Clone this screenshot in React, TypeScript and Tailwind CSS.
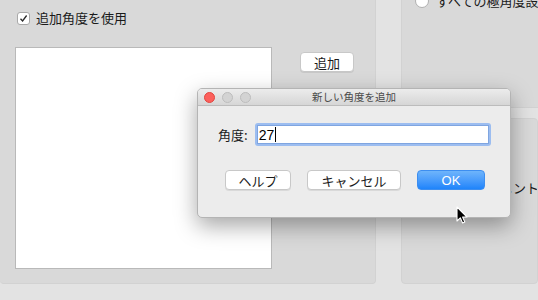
import React from 'react';

const jp = { fontFamily: '"Noto Sans CJK JP", "Liberation Sans", sans-serif' };

const WhiteButton = ({ label, width }: { label: string; width: string }) => (
  <div
    className={`${width} h-[20px] flex items-center justify-center bg-white rounded-[4px] border border-[#c8c8c8] shadow-[0_1px_0_rgba(0,0,0,0.08)] text-[13px] text-[#1a1a1a] leading-none`}
    style={jp}
  >
    {label}
  </div>
);

const App = () => {
  return (
    <div className="relative w-[538px] h-[300px] overflow-hidden bg-[#e3e3e3] select-none" style={jp}>
      <div className="flex h-[284px]">
        {/* Left panel */}
        <div className="w-[376px] shrink-0 h-full bg-[#d9d9d9] rounded-b-[4px] border-r border-b border-[#d2d2d2] flex flex-col">
          <div className="flex items-center gap-[6px] pl-[17px] pt-[11px]">
            <div className="w-[13px] h-[13px] bg-white rounded-[3px] border border-[#a9a9a9] flex items-center justify-center">
              <svg width="9" height="9" viewBox="0 0 9 9">
                <path d="M1.5 4.8 L3.6 7 L7.6 1.5" fill="none" stroke="#2a2a2a" strokeWidth="1.3" />
              </svg>
            </div>
            <span className="text-[13px] text-[#1a1a1a] leading-[14px]">追加角度を使用</span>
          </div>
          <div className="flex pl-[15px] pt-[22px] gap-[28px]">
            <div className="w-[257px] h-[222px] bg-white border border-[#b9b9b9]" />
            <div className="flex flex-col gap-[16px] pt-[5px]">
              <WhiteButton label="追加" width="w-[54px]" />
              <WhiteButton label="" width="w-[54px]" />
            </div>
          </div>
        </div>

        {/* Right column */}
        <div className="ml-[25px] flex-1 min-w-0 flex flex-col gap-[10px]">
          <div className="h-[108px] bg-[#d9d9d9] rounded-bl-[4px] border-l border-b border-[#d2d2d2] pl-[13px] overflow-hidden">
            <div className="flex items-center gap-[7px] mt-[-6px]">
              <div className="w-[14px] h-[14px] shrink-0 rounded-full bg-white border border-[#b0b0b0]" />
              <span className="text-[13px] text-[#1a1a1a] whitespace-nowrap leading-[14px]">すべての極角度設定</span>
            </div>
          </div>
          <div className="flex-1 bg-[#d9d9d9] rounded-[4px] border border-[#d2d2d2] pl-[85px] pt-[55px] overflow-hidden">
            <span className="text-[13px] text-[#1a1a1a] whitespace-nowrap">コメント</span>
          </div>
        </div>
      </div>

      {/* Dialog */}
      <div className="absolute left-[197px] top-[88px] w-[314px] h-[130px] bg-[#ececec] rounded-[5px] border border-[#b4b4b4] shadow-[0_8px_22px_rgba(0,0,0,0.35)] overflow-hidden">
        <div className="relative h-[17px] bg-gradient-to-b from-[#ececec] to-[#d6d6d6] border-b border-[#bcbcbc] flex items-center justify-center">
          <div className="absolute left-[6px] top-[3px] flex gap-[7px]">
            <div className="w-[11px] h-[11px] rounded-full bg-[#fc605c] border border-[#e0463f]" />
            <div className="w-[11px] h-[11px] rounded-full bg-[#d3d3d3] border border-[#bcbcbc]" />
            <div className="w-[11px] h-[11px] rounded-full bg-[#d3d3d3] border border-[#bcbcbc]" />
          </div>
          <span className="text-[10.5px] text-[#4a4a4a] leading-none">新しい角度を追加</span>
        </div>
        <div className="flex items-center pl-[20px] pt-[17px] gap-[7px]">
          <span className="text-[13px] text-[#1a1a1a] leading-none">角度:</span>
          <div className="w-[236px] h-[23px] rounded-[3px] bg-[#9cbdf0] p-[2px]">
            <div className="w-full h-full bg-white border border-[#7fa5e0] flex items-center pl-[1px]">
              <span className="text-[14px] text-black leading-none" style={{ fontFamily: '"Liberation Sans", sans-serif' }}>27</span>
              <div className="w-[1px] h-[15px] bg-black ml-[1px]" />
            </div>
          </div>
        </div>
        <div className="flex pl-[27px] pt-[24px] gap-[16px]">
          <WhiteButton label="ヘルプ" width="w-[66px]" />
          <WhiteButton label="キャンセル" width="w-[94px]" />
          <div
            className="w-[68px] h-[20px] rounded-[4px] bg-gradient-to-b from-[#6eb4fb] to-[#1d84fb] border border-[#3d8ef0] flex items-center justify-center text-[13px] text-white leading-none"
            style={{ fontFamily: '"Liberation Sans", sans-serif' }}
          >
            OK
          </div>
        </div>
      </div>

      {/* Mouse pointer */}
      <svg className="absolute left-[456px] top-[206px]" width="14" height="19" viewBox="0 0 14 19">
        <path d="M1 1 L1 15 L4.3 11.8 L6.6 17 L8.8 16 L6.6 11 L11 11 Z" fill="#000" stroke="#fff" strokeWidth="1.1" strokeLinejoin="round" />
      </svg>
    </div>
  );
};

export default App;
